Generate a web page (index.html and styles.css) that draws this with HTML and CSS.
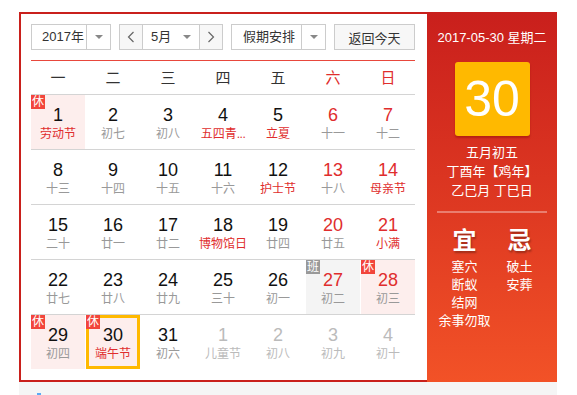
FILE: index.html
```html
<!DOCTYPE html>
<html lang="zh-CN">
  <head>
    <meta charset="utf-8">
    <title>万年历</title>
    <link rel="stylesheet" href="styles.css">
  </head>
  <body>
    <div class="calendar">
      <div class="cal-main">
        <div class="toolbar">
          <div class="select year-select">
            <span class="select-text">2017年</span>
            <span class="select-arrow"><i class="caret"></i></span>
          </div>
          <div class="select month-select">
            <span class="nav-btn prev"><svg width="8" height="12" viewBox="0 0 8 12"><polyline points="6.5,1 1.5,6 6.5,11" fill="none" stroke="#666" stroke-width="1.2"/></svg></span>
            <span class="month-text">5月<i class="caret"></i></span>
            <span class="nav-btn next"><svg width="8" height="12" viewBox="0 0 8 12"><polyline points="1.5,1 6.5,6 1.5,11" fill="none" stroke="#666" stroke-width="1.2"/></svg></span>
          </div>
          <div class="select holiday-select">
            <span class="select-text">假期安排</span>
            <span class="select-arrow"><i class="caret"></i></span>
          </div>
          <button class="today-btn">返回今天</button>
        </div>

        <div class="week-head">
          <span>一</span><span>二</span><span>三</span><span>四</span><span>五</span>
          <span class="weekend">六</span><span class="weekend">日</span>
        </div>

        <div class="week">
          <div class="day rest"><i class="badge">休</i><div class="num">1</div><div class="lunar fest">劳动节</div></div>
          <div class="day"><div class="num">2</div><div class="lunar">初七</div></div>
          <div class="day"><div class="num">3</div><div class="lunar">初八</div></div>
          <div class="day"><div class="num">4</div><div class="lunar fest" title="五四青年节">五四青<span class="dots">...</span></div></div>
          <div class="day"><div class="num">5</div><div class="lunar fest">立夏</div></div>
          <div class="day weekend"><div class="num">6</div><div class="lunar">十一</div></div>
          <div class="day weekend"><div class="num">7</div><div class="lunar">十二</div></div>
        </div>
        <div class="week">
          <div class="day"><div class="num">8</div><div class="lunar">十三</div></div>
          <div class="day"><div class="num">9</div><div class="lunar">十四</div></div>
          <div class="day"><div class="num">10</div><div class="lunar">十五</div></div>
          <div class="day"><div class="num">11</div><div class="lunar">十六</div></div>
          <div class="day"><div class="num">12</div><div class="lunar fest">护士节</div></div>
          <div class="day weekend"><div class="num">13</div><div class="lunar">十八</div></div>
          <div class="day weekend"><div class="num">14</div><div class="lunar fest">母亲节</div></div>
        </div>
        <div class="week">
          <div class="day"><div class="num">15</div><div class="lunar">二十</div></div>
          <div class="day"><div class="num">16</div><div class="lunar">廿一</div></div>
          <div class="day"><div class="num">17</div><div class="lunar">廿二</div></div>
          <div class="day"><div class="num">18</div><div class="lunar fest">博物馆日</div></div>
          <div class="day"><div class="num">19</div><div class="lunar">廿四</div></div>
          <div class="day weekend"><div class="num">20</div><div class="lunar">廿五</div></div>
          <div class="day weekend"><div class="num">21</div><div class="lunar fest">小满</div></div>
        </div>
        <div class="week">
          <div class="day"><div class="num">22</div><div class="lunar">廿七</div></div>
          <div class="day"><div class="num">23</div><div class="lunar">廿八</div></div>
          <div class="day"><div class="num">24</div><div class="lunar">廿九</div></div>
          <div class="day"><div class="num">25</div><div class="lunar">三十</div></div>
          <div class="day"><div class="num">26</div><div class="lunar">初一</div></div>
          <div class="day weekend work"><i class="badge">班</i><div class="num">27</div><div class="lunar">初二</div></div>
          <div class="day weekend rest"><i class="badge">休</i><div class="num">28</div><div class="lunar">初三</div></div>
        </div>
        <div class="week">
          <div class="day rest"><i class="badge">休</i><div class="num">29</div><div class="lunar">初四</div></div>
          <div class="day rest selected"><i class="badge">休</i><div class="num">30</div><div class="lunar fest">端午节</div></div>
          <div class="day"><div class="num">31</div><div class="lunar">初六</div></div>
          <div class="day other"><div class="num">1</div><div class="lunar">儿童节</div></div>
          <div class="day other"><div class="num">2</div><div class="lunar">初八</div></div>
          <div class="day other"><div class="num">3</div><div class="lunar">初九</div></div>
          <div class="day other"><div class="num">4</div><div class="lunar">初十</div></div>
        </div>
      </div>

      <div class="cal-side">
        <div class="side-date">2017-05-30 星期二</div>
        <div class="side-day">30</div>
        <div class="side-lunar">
          <div>五月初五</div>
          <div>丁酉年【鸡年】</div>
          <div>乙巳月 丁巳日</div>
        </div>
        <div class="side-line"></div>
        <div class="almanac">
          <div class="almanac-col">
            <div class="almanac-title">宜</div>
            <div>塞穴</div>
            <div>断蚁</div>
            <div>结网</div>
            <div>余事勿取</div>
          </div>
          <div class="almanac-col">
            <div class="almanac-title">忌</div>
            <div>破土</div>
            <div>安葬</div>
          </div>
        </div>
      </div>
    </div>
    <div class="page-foot"><i class="foot-mark"></i></div>
  </body>
</html>
```

FILE: styles.css
```css
body {
  margin: 0;
  background: #fff;
  color: #333;
  font-family: "Liberation Sans", "Noto Sans CJK SC", sans-serif;
  font-size: 13px;
}

.calendar {
  display: flex;
  width: 538px;
  margin: 12px 0 0 19px;
}

.cal-main {
  width: 396px;
  padding: 10px 12px 11px 10px;
  border: 2px solid #c9201c;
  border-right: none;
}

/* toolbar */
.toolbar {
  display: flex;
  justify-content: space-between;
  height: 26px;
  margin-bottom: 10px;
}

.select {
  display: flex;
  box-sizing: border-box;
  height: 26px;
  border: 1px solid #ccc;
  background: #fff;
  line-height: 24px;
}

.year-select {
  width: 80px;
}
.month-select {
  width: 104px;
}
.holiday-select {
  width: 95px;
}

.select-text {
  flex: 1;
  padding-left: 10px;
}
.holiday-select .select-text {
  padding-left: 11px;
}

.select-arrow {
  display: flex;
  align-items: center;
  justify-content: center;
  width: 23px;
  border-left: 1px solid #ccc;
}

.caret {
  display: inline-block;
  width: 0;
  height: 0;
  border-left: 4px solid transparent;
  border-right: 4px solid transparent;
  border-top: 4px solid #888;
}

.nav-btn {
  display: flex;
  align-items: center;
  justify-content: center;
  width: 22px;
  background: #f7f7f7;
}
.nav-btn.prev {
  border-right: 1px solid #ccc;
}
.nav-btn.next {
  border-left: 1px solid #ccc;
}

.month-text {
  flex: 1;
  display: flex;
  align-items: center;
  justify-content: space-between;
  padding: 0 8px 0 8px;
}

.today-btn {
  width: 81px;
  height: 26px;
  padding: 0;
  border: 1px solid #ccc;
  background: #f7f7f7;
  color: #333;
  font-family: inherit;
  font-size: 13px;
}

/* grid */
.week-head {
  display: grid;
  grid-template-columns: repeat(7, 54px);
  column-gap: 1px;
  height: 33px;
  border-top: 1px solid #e8483c;
  line-height: 33px;
  text-align: center;
  font-size: 15px;
  color: #333;
}
.week-head .weekend {
  color: #e02d2d;
}

.week {
  display: grid;
  grid-template-columns: repeat(7, 54px);
  column-gap: 1px;
  border-top: 1px solid #d4d4d4;
}

.day {
  position: relative;
  box-sizing: border-box;
  height: 54px;
  padding-top: 10px;
  text-align: center;
}

.num {
  height: 20px;
  line-height: 20px;
  font-size: 18px;
  color: #111;
}

.lunar {
  height: 18px;
  line-height: 18px;
  font-size: 12px;
  color: #999;
  white-space: nowrap;
}

.lunar .dots {
  font-family: "Liberation Sans", sans-serif;
  letter-spacing: -0.5px;
}

.lunar.fest {
  color: #e02d2d;
}

.day.weekend .num {
  color: #e02d2d;
}

.day.rest {
  background: #fdeeed;
}
.day.work {
  background: #f4f4f4;
}

.day.other .num,
.day.other .lunar {
  color: #bbb;
}

.day.selected {
  border: 3px solid #ffb900;
  padding-top: 7px;
}
.day.selected .badge {
  top: -3px;
  left: -3px;
}

.badge {
  position: absolute;
  top: 0;
  left: 0;
  width: 14px;
  height: 14px;
  background: #f2453b;
  color: #fff;
  font-style: normal;
  font-size: 12px;
  line-height: 14px;
}
.day.work .badge {
  background: #999;
}

/* side panel */
.cal-side {
  width: 130px;
  background: linear-gradient(180deg, #c91f1c 0%, #df3a22 55%, #f25227 100%);
  color: #fff;
  text-align: center;
}

.side-date {
  margin-top: 17px;
  line-height: 18px;
  font-size: 13px;
}

.side-day {
  width: 75px;
  height: 74px;
  margin: 15px auto 0;
  border-radius: 3px;
  background: #ffb900;
  box-shadow: 0 2px 2px rgba(120, 0, 0, 0.35);
  font-size: 50px;
  line-height: 74px;
}

.side-lunar {
  margin-top: 7px;
  line-height: 19px;
  font-size: 13px;
}

.side-line {
  height: 2px;
  margin: 11px 10px 0;
  background: rgba(255, 255, 255, 0.35);
}

.almanac {
  display: flex;
  margin: 14px 10px 0;
  font-size: 13px;
  line-height: 18px;
}

.almanac-col {
  width: 55px;
}

.almanac-title {
  margin-bottom: 3px;
  font-size: 24px;
  font-weight: bold;
  line-height: 28px;
  text-shadow: 1px 2px 2px rgba(0, 0, 0, 0.3);
}

.page-foot {
  position: relative;
  width: 538px;
  height: 13px;
  margin-left: 19px;
  background: #f5f5f5;
}

.foot-mark {
  position: absolute;
  left: 18px;
  bottom: 0;
  width: 4px;
  height: 2px;
  background: #5aaaf5;
}
```
